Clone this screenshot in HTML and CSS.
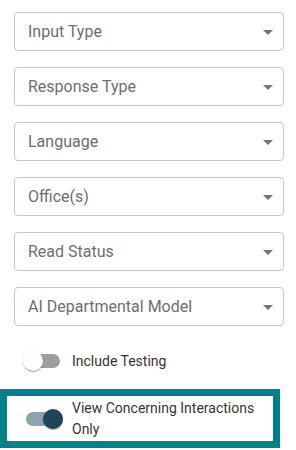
FILE: index.html
```html
<html>
  <head>
    <link rel="stylesheet" href="styles.css">
    <title>Filters</title>
  </head>
  <body>
    <div class="filters">
      <div class="select"><span>Input Type</span><svg class="arrow" viewBox="0 0 24 24"><path d="M7 10l5 5 5-5z"/></svg></div>
      <div class="select"><span>Response Type</span><svg class="arrow" viewBox="0 0 24 24"><path d="M7 10l5 5 5-5z"/></svg></div>
      <div class="select"><span>Language</span><svg class="arrow" viewBox="0 0 24 24"><path d="M7 10l5 5 5-5z"/></svg></div>
      <div class="select"><span>Office(s)</span><svg class="arrow" viewBox="0 0 24 24"><path d="M7 10l5 5 5-5z"/></svg></div>
      <div class="select"><span>Read Status</span><svg class="arrow" viewBox="0 0 24 24"><path d="M7 10l5 5 5-5z"/></svg></div>
      <div class="select"><span>AI Departmental Model</span><svg class="arrow" viewBox="0 0 24 24"><path d="M7 10l5 5 5-5z"/></svg></div>

      <label class="toggle-row">
        <span class="switch"><span class="track"></span><span class="thumb"></span></span>
        <span class="label">Include Testing</span>
      </label>

      <div class="highlight">
        <label class="toggle-row">
          <span class="switch on"><span class="track"></span><span class="thumb"></span></span>
          <span class="label">View Concerning Interactions Only</span>
        </label>
      </div>
    </div>
  </body>
</html>
```

FILE: styles.css
```css
/* Filter panel */
body {
    font-family: Roboto, "Liberation Sans", sans-serif;
    background-color: #fff;
    margin: 0;
    padding: 0;
}

.filters {
    width: 270px;
    padding: 12px 0 0 14px;
    display: flex;
    flex-direction: column;
}

/* Select boxes */
.select {
    height: 39px;
    box-sizing: border-box;
    border: 1px solid #c4c4c4;
    border-radius: 4px;
    margin-bottom: 16px;
    padding: 0 3px 0 13px;
    display: flex;
    align-items: center;
    justify-content: space-between;
    font-size: 16px;
    color: #6e6e6e;
}

.arrow {
    width: 24px;
    height: 24px;
    fill: #757575;
}

/* Switches */
.toggle-row {
    display: flex;
    align-items: center;
    min-height: 38px;
}

.switch {
    position: relative;
    width: 58px;
    height: 38px;
    flex: none;
}

.track {
    position: absolute;
    left: 12px;
    top: 12px;
    width: 34px;
    height: 14px;
    border-radius: 7px;
    background-color: #9e9e9e;
}

.thumb {
    position: absolute;
    left: 9px;
    top: 9px;
    width: 20px;
    height: 20px;
    border-radius: 50%;
    background-color: #fff;
    box-shadow: 0 2px 1px -1px rgba(0, 0, 0, 0.2), 0 1px 1px rgba(0, 0, 0, 0.14), 0 1px 3px rgba(0, 0, 0, 0.12);
}

.switch.on .track {
    background-color: #8fa3ac;
}

.switch.on .thumb {
    left: 29px;
    background-color: #1f4458;
}

.label {
    font-size: 14px;
    line-height: 21px;
    color: #3a3230;
}

/* Highlighted option */
.highlight {
    margin: 9px 0 0 -14px;
    width: 259px;
    border: 7px solid #00818a;
    padding: 0 0 1px 7px;
}

.highlight .toggle-row {
    padding-top: 2px;
}
```
